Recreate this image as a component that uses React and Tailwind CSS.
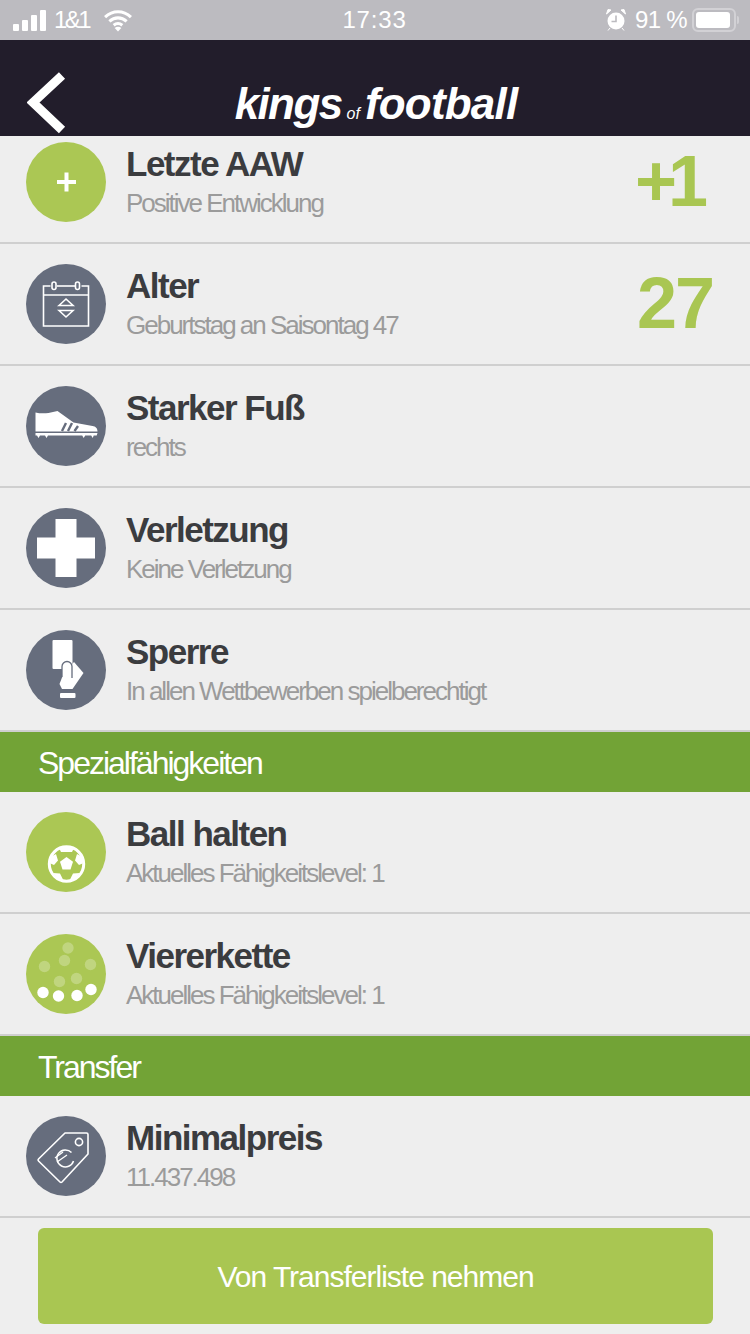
const font = { fontFamily: '"Liberation Sans", Arial, sans-serif' };

const PlusIcon = () => (
  <svg viewBox="0 0 80 80" className="w-20 h-20">
    <path d="M40.500 30.500v19M31 40h19" stroke="#fff" strokeWidth="4" fill="none" />
  </svg>
);

const CalendarIcon = () => (
  <svg viewBox="0 0 80 80" className="w-20 h-20" fill="none" stroke="#fff" strokeWidth="1.600">
    <path d="M24.500 22h-7v40h45v-40h-7" />
    <path d="M17.500 31h45" />
    <path d="M31 22h18" />
    <rect x="26" y="18" width="4" height="7.500" rx="2" />
    <rect x="49.500" y="18" width="4" height="7.500" rx="2" />
    <path d="M33 41.500l7-6.500 7 6.500zM33 46.500l7 6.500 7-6.500z" />
  </svg>
);

const ShoeIcon = () => (
  <svg viewBox="0 0 80 80" className="w-20 h-20">
    <path
      d="M9.500 26.500c4 1 9 1 13 .5l9-2 16 11.500 19 3.500c3 .5 5 2 5 5.500H9.500z"
      fill="#fff"
    />
    <path d="M36 45l4-8M42 45l4-8M48.500 45l3.500-5" stroke="#666d7d" strokeWidth="2.400" fill="none" />
    <path
      d="M9.500 47h62l-.8 2.500h-3l-1 2.500-1.500-2.500h-6l-1.500 2.500-1.500-2.500H22l-1.500 2.500-1.500-2.500h-5l-1.500 2.500-1.500-2.500h-1.500z"
      fill="#fff"
    />
  </svg>
);

const CrossIcon = () => (
  <svg viewBox="0 0 80 80" className="w-20 h-20">
    <path d="M29.500 11h21v18.500H69v21H50.500V69h-21V50.500H11v-21h18.500z" fill="#fff" />
  </svg>
);

const CardIcon = () => (
  <svg viewBox="0 0 80 80" className="w-20 h-20">
    <rect x="26.500" y="10" width="20" height="29" rx="1" fill="#fff" />
    <path d="M48 32l9.500 11-11 16H36l-2.500-5 3.500-9z" fill="#fff" />
    <path
      d="M36 47V36.500a5 5 0 0 1 10 0V48"
      fill="#fff"
      stroke="#666d7d"
      strokeWidth="1.300"
    />
    <rect x="34" y="63" width="15.500" height="5" rx="1" fill="#fff" />
  </svg>
);

const BallIcon = () => (
  <svg viewBox="0 0 80 80" className="w-20 h-20">
    <circle cx="40.500" cy="52" r="17.200" fill="none" stroke="#fff" strokeWidth="3" />
    <path d="M40.500 45l6.500 4.800-2.500 7.700h-8l-2.500-7.700z" fill="#fff" />
    <path d="M33 36h15l-2 4h-11zM24.500 45l5.500-3 2 6.500-4 4.500-3.500-1.500zM56.500 45l-5.500-3-2 6.500 4 4.500 3.500-1.500zM27 61l7 .5 3 6-5-.5zM54 61l-7 .5-3 6 5-.5z" fill="#fff" />
  </svg>
);

const FormationIcon = () => (
  <svg viewBox="0 0 80 80" className="w-20 h-20" fill="#fff">
    <g opacity="0.25">
      <circle cx="42" cy="14" r="5.700" />
      <circle cx="38.500" cy="26.500" r="5.700" />
      <circle cx="18.500" cy="32.500" r="5.700" />
      <circle cx="64.500" cy="30.500" r="5.700" />
      <circle cx="33.500" cy="47.500" r="5.700" />
      <circle cx="50.500" cy="44.500" r="5.700" />
    </g>
    <circle cx="17" cy="58.500" r="5.700" />
    <circle cx="32.500" cy="62" r="5.700" />
    <circle cx="51" cy="61.500" r="5.700" />
    <circle cx="65" cy="55.500" r="5.700" />
  </svg>
);

const TagIcon = () => (
  <svg viewBox="0 0 80 80" className="w-20 h-20" fill="none" stroke="#fff">
    <path
      d="M39 17h21.500q1.500 0 1.500 1.500V38L36 66q-1 1-2 0L12.500 45q-1-1 0-2z"
      strokeWidth="1.600"
      strokeLinejoin="round"
    />
    <circle cx="53" cy="26" r="3.600" strokeWidth="1.600" />
    <path d="M45.500 36.500A8.500 8.500 0 1 0 47.500 45" strokeWidth="1.500" />
    <path d="M29 42l8-6M31 46l10-7" strokeWidth="1.300" />
  </svg>
);

const rows1 = [
  {
    title: "Letzte AAW",
    sub: "Positive Entwicklung",
    Icon: PlusIcon,
    green: true,
    value: "+1",
    valueClass: "tracking-[-9px] mr-[14px]",
  },
  { title: "Alter", sub: "Geburtstag an Saisontag 47", Icon: CalendarIcon, value: "27", valueClass: "tracking-[-2px]" },
  { title: "Starker Fuß", sub: "rechts", Icon: ShoeIcon },
  { title: "Verletzung", sub: "Keine Verletzung", Icon: CrossIcon },
  { title: "Sperre", sub: "In allen Wettbewerben spielberechtigt", Icon: CardIcon },
];

const rows2 = [
  { title: "Ball halten", sub: "Aktuelles Fähigkeitslevel: 1", Icon: BallIcon, green: true },
  { title: "Viererkette", sub: "Aktuelles Fähigkeitslevel: 1", Icon: FormationIcon, green: true },
];

const Row = ({ title, sub, Icon, green, value, valueClass }) => (
  <div className="h-[122px] flex items-start gap-5 pl-[26px] pr-[37px] pt-5 border-b-2 border-[#cfcfcf]">
    <div
      className={`w-20 h-20 rounded-full shrink-0 ${green ? "bg-[#abc754]" : "bg-[#666d7d]"}`}
    >
      <Icon />
    </div>
    <div className="flex-1">
      <p className="text-[35px] leading-[44px] font-bold tracking-[-1.5px] text-[#3b3c3f]">{title}</p>
      <p className="text-[26px] leading-[36px] -mt-px tracking-[-2px] text-[#9b9b9b]">{sub}</p>
    </div>
    {value && (
      <span className={`text-[72px] leading-[80px] -mt-px font-bold text-[#a9c652] ${valueClass}`}>{value}</span>
    )}
  </div>
);

const SectionHeader = ({ children }) => (
  <div className="h-[60px] bg-[#72a336] pl-[38px] pt-[2px] flex items-center text-[32px] tracking-[-2px] text-white">
    {children}
  </div>
);

const StatusBar = () => (
  <div className="h-10 bg-[#bcbbc0] flex items-center justify-between pl-[13px] pr-[11px] text-white text-[24px]">
    <div className="flex items-center w-[197px]">
      <div className="flex items-end gap-[3px] h-[21px]">
        <div className="w-[6px] h-[7px] bg-white rounded-[1px]" />
        <div className="w-[6px] h-[11px] bg-white rounded-[1px]" />
        <div className="w-[6px] h-[16px] bg-white rounded-[1px]" />
        <div className="w-[6px] h-[21px] bg-white rounded-[1px]" />
      </div>
      <span className="tracking-[-2.500px] ml-[8px]">1&amp;1</span>
      <svg viewBox="0 0 30 24" className="w-[30px] h-[23px] ml-[14px]" fill="none" stroke="#fff" strokeWidth="3.200">
        <path d="M1.500 8.500c8-7.500 19-7.500 27 0" />
        <path d="M6 13c5.500-5 12.500-5 18 0" />
        <path d="M10.500 17c3-2.500 6-2.500 9 0" />
        <path d="M15 23.500l-3.500-3.800c2-1.500 5-1.500 7 0z" fill="#fff" stroke="none" />
      </svg>
    </div>
    <span className="tracking-[0.8px]">17:33</span>
    <div className="flex items-center justify-end w-[200px]">
      <svg viewBox="0 0 20 22" className="w-[20px] h-[22px] mr-[9px]">
        <circle cx="10" cy="12" r="8.500" fill="#fff" />
        <path d="M10 6.500V12.500H5.500" fill="none" stroke="#bcbbc0" strokeWidth="1.600" />
        <path d="M.5 5L5 1 2 .5zM19.500 5L15 1l3-.5zM4 19l-2 2.500M16 19l2 2.500" fill="#fff" stroke="#fff" strokeWidth="1" />
      </svg>
      <span className="tracking-[-0.7px] mr-[5px]">91 %</span>
      <div className="w-[44px] h-[24px] border-2 border-[#d2d1d5] rounded-[6px] p-[2px]">
        <div className="w-[34px] h-full bg-white rounded-[3px]" />
      </div>
      <div className="w-[2px] h-[8px] ml-px bg-[#d2d1d5] rounded-r-sm" />
    </div>
  </div>
);

const Header = () => (
  <div className="relative h-24 bg-[#221d2b] shrink-0 flex items-end justify-center">
    <svg viewBox="0 0 40 62" className="absolute left-[27px] top-[32px] w-10 h-[62px]" fill="none">
      <path d="M35 3.500L6 30.500l29 27.500" stroke="#fff" strokeWidth="9" strokeLinecap="butt" />
    </svg>
    <div className="text-white italic font-bold flex items-baseline text-[44px] leading-[44px] ml-[2px]">
      <span className="tracking-[-1.6px]">kings</span>
      <span className="text-[16px] font-normal tracking-normal mx-[5px]">of</span>
      <span className="tracking-[-0.8px]">football</span>
    </div>
  </div>
);

export default function App() {
  return (
    <div className="w-[750px] h-[1334px] flex flex-col overflow-hidden bg-[#eeeeee]" style={font}>
      <StatusBar />
      <Header />
      <div className="flex-1 overflow-hidden">
        <div className="-mt-[14px]">
          {rows1.map((r) => (
            <Row key={r.title} {...r} />
          ))}
          <SectionHeader>Spezialfähigkeiten</SectionHeader>
          {rows2.map((r) => (
            <Row key={r.title} {...r} />
          ))}
          <SectionHeader>Transfer</SectionHeader>
          <Row title="Minimalpreis" sub="11.437.498" Icon={TagIcon} />
          <div className="pl-[38px] pr-[37px] pt-[10px]">
            <button className="w-full h-24 rounded-[6px] bg-[#a9c652] text-white text-[30px] tracking-[-1px]">
              Von Transferliste nehmen
            </button>
          </div>
        </div>
      </div>
    </div>
  );
}
